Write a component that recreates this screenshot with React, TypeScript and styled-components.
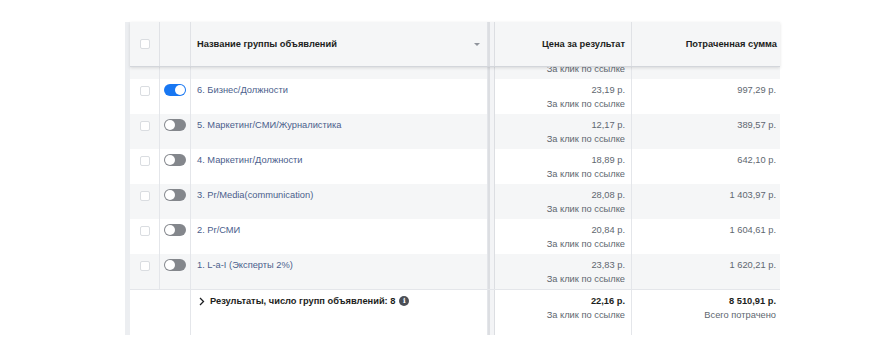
import React from 'react';
import styled, { createGlobalStyle } from 'styled-components';

const GlobalStyle = createGlobalStyle`
  body {
    margin: 0;
    background: #ffffff;
    font-family: "Liberation Sans", Arial, sans-serif;
  }
`;

const COLUMNS = '30px 31px 297px 7px 137px 148px';

interface AdSet {
  id: number;
  name: string;
  active: boolean;
  cost: string;
  spent: string;
}

// the first row is scrolled up under the sticky header; only its last line shows
const rows: AdSet[] = [
  { id: 7, name: '', active: false, cost: '', spent: '' },
  { id: 6, name: '6. Бизнес/Должности', active: true, cost: '23,19 р.', spent: '997,29 р.' },
  { id: 5, name: '5. Маркетинг/СМИ/Журналистика', active: false, cost: '12,17 р.', spent: '389,57 р.' },
  { id: 4, name: '4. Маркетинг/Должности', active: false, cost: '18,89 р.', spent: '642,10 р.' },
  { id: 3, name: '3. Pr/Media(communication)', active: false, cost: '28,08 р.', spent: '1 403,97 р.' },
  { id: 2, name: '2. Pr/СМИ', active: false, cost: '20,84 р.', spent: '1 604,61 р.' },
  { id: 1, name: '1. L-a-I (Эксперты 2%)', active: false, cost: '23,83 р.', spent: '1 620,21 р.' },
];

const Page = styled.div`
  padding: 22px 0 0 125px;
`;

const Table = styled.div`
  width: 650px;
  border-left: 5px solid #eceef1;
  font-size: 9.3px;
  color: #606770;
`;

const HeaderRow = styled.div`
  position: relative;
  z-index: 1;
  display: grid;
  grid-template-columns: ${COLUMNS};
  height: 45px;
  background: #f5f6f7;
  border-bottom: 1px solid #d3d6db;
  box-shadow: 0 1px 3px rgba(0, 0, 0, 0.12);
  box-sizing: border-box;
`;

const Body = styled.div`
  height: 222px;
  overflow: hidden;
`;

const BodyInner = styled.div`
  margin-top: -23px;
`;

const Row = styled.div<{ $shaded: boolean }>`
  display: grid;
  grid-template-columns: ${COLUMNS};
  height: 35px;
  background: ${(p) => (p.$shaded ? '#f5f6f7' : '#ffffff')};
`;

const FooterRow = styled.div`
  display: grid;
  grid-template-columns: ${COLUMNS};
  height: 46px;
  background: #ffffff;
  border-top: 1px solid #e4e6ea;
  box-sizing: border-box;
`;

const Cell = styled.div<{ $align?: 'left' | 'right'; $span?: number; $pr?: number }>`
  box-sizing: border-box;
  border-right: 1px solid #e4e6ea;
  padding: 4px ${(p) => p.$pr ?? 6}px 0 6px;
  text-align: ${(p) => p.$align ?? 'left'};
  line-height: 14px;
  ${(p) => (p.$span ? `grid-column: span ${p.$span};` : '')}
  &:last-child {
    border-right: none;
  }
`;

const CenterCell = styled(Cell)`
  display: flex;
  justify-content: center;
  padding: 4px 0 0;
`;

const HeadCell = styled.div<{ $align?: 'left' | 'right'; $pr?: number }>`
  box-sizing: border-box;
  display: flex;
  align-items: center;
  justify-content: ${(p) => (p.$align === 'right' ? 'flex-end' : 'space-between')};
  padding: 0 ${(p) => p.$pr ?? 6}px 0 6px;
  border-right: 1px solid #e0e2e6;
  font-weight: bold;
  color: #1c1e21;
  &:last-child {
    border-right: none;
  }
`;

const HeadCenter = styled(HeadCell)`
  justify-content: center;
  padding: 0;
`;

const Divider = styled.div`
  box-sizing: border-box;
  border-left: 2px solid #dcdee2;
  border-right: 1px solid #dcdee2;
  background: #f3f4f6;
`;

const Checkbox = styled.span`
  display: block;
  width: 10px;
  height: 10px;
  margin-top: 3px;
  box-sizing: border-box;
  border: 1px solid #dadde1;
  border-radius: 2px;
  background: #ffffff;
`;

const HeadCheckbox = styled(Checkbox)`
  margin-top: 0;
`;

const Toggle = styled.span<{ $on: boolean }>`
  position: relative;
  display: block;
  width: 22px;
  height: 12px;
  margin-top: 1px;
  border-radius: 6px;
  background: ${(p) => (p.$on ? '#1877f2' : '#84878c')};
  &::after {
    content: '';
    position: absolute;
    top: 1px;
    left: ${(p) => (p.$on ? '11px' : '1px')};
    width: 10px;
    height: 10px;
    border-radius: 50%;
    background: #ffffff;
  }
`;

const Name = styled.span`
  color: #4b5e8c;
`;

const Value = styled.div<{ $strong?: boolean }>`
  min-height: 14px;
  color: ${(p) => (p.$strong ? '#1c1e21' : '#606770')};
  font-weight: ${(p) => (p.$strong ? 'bold' : 'normal')};
`;

const Caret = styled.span`
  width: 0;
  height: 0;
  border-left: 3px solid transparent;
  border-right: 3px solid transparent;
  border-top: 3px solid #90949c;
  margin-right: 1px;
`;

const Summary = styled.div`
  box-sizing: border-box;
  display: flex;
  align-items: center;
  align-self: start;
  gap: 5px;
  height: 18px;
  padding: 4px 0 0 8px;
  font-weight: bold;
  color: #1c1e21;
  line-height: 14px;
`;

const SummaryCell = styled.div`
  border-right: 1px solid #e4e6ea;
`;

const InfoDot = styled.span`
  display: inline-flex;
  align-items: center;
  justify-content: center;
  width: 10px;
  height: 10px;
  border-radius: 50%;
  background: #4b4f56;
  color: #ffffff;
  font-size: 7px;
  font-weight: bold;
  font-family: "DejaVu Serif", serif;
  margin-left: -1px;
`;

const Chevron = () => (
  <svg width="6" height="9" viewBox="0 0 6 9">
    <path d="M1 1l3.5 3.5L1 8" fill="none" stroke="#1c1e21" strokeWidth="1.3" />
  </svg>
);

export default function App(): React.ReactElement {
  return (
    <Page>
      <GlobalStyle />
      <Table>
        <HeaderRow>
          <HeadCenter>
            <HeadCheckbox />
          </HeadCenter>
          <HeadCenter />
          <HeadCell>
            <span>Название группы объявлений</span>
            <Caret />
          </HeadCell>
          <Divider />
          <HeadCell $align="right">Цена за результат</HeadCell>
          <HeadCell $align="right" $pr={3}>Потраченная сумма</HeadCell>
        </HeaderRow>
        <Body>
          <BodyInner>
            {rows.map((row, i) => (
              <Row key={row.id} $shaded={i % 2 === 0}>
                <CenterCell>
                  <Checkbox />
                </CenterCell>
                <CenterCell>
                  <Toggle $on={row.active} />
                </CenterCell>
                <Cell>
                  <Name>{row.name}</Name>
                </Cell>
                <Divider />
                <Cell $align="right">
                  <Value>{row.cost}</Value>
                  <Value>За клик по ссылке</Value>
                </Cell>
                <Cell $align="right" $pr={4}>
                  <Value>{row.spent}</Value>
                </Cell>
              </Row>
            ))}
          </BodyInner>
        </Body>
        <FooterRow>
          <Cell $span={2} />
          <SummaryCell>
            <Summary>
              <Chevron />
              <span>Результаты, число групп объявлений: 8</span>
              <InfoDot>i</InfoDot>
            </Summary>
          </SummaryCell>
          <Divider />
          <Cell $align="right">
            <Value $strong>22,16 р.</Value>
            <Value>За клик по ссылке</Value>
          </Cell>
          <Cell $align="right" $pr={4}>
            <Value $strong>8 510,91 р.</Value>
            <Value>Всего потрачено</Value>
          </Cell>
        </FooterRow>
      </Table>
    </Page>
  );
}
